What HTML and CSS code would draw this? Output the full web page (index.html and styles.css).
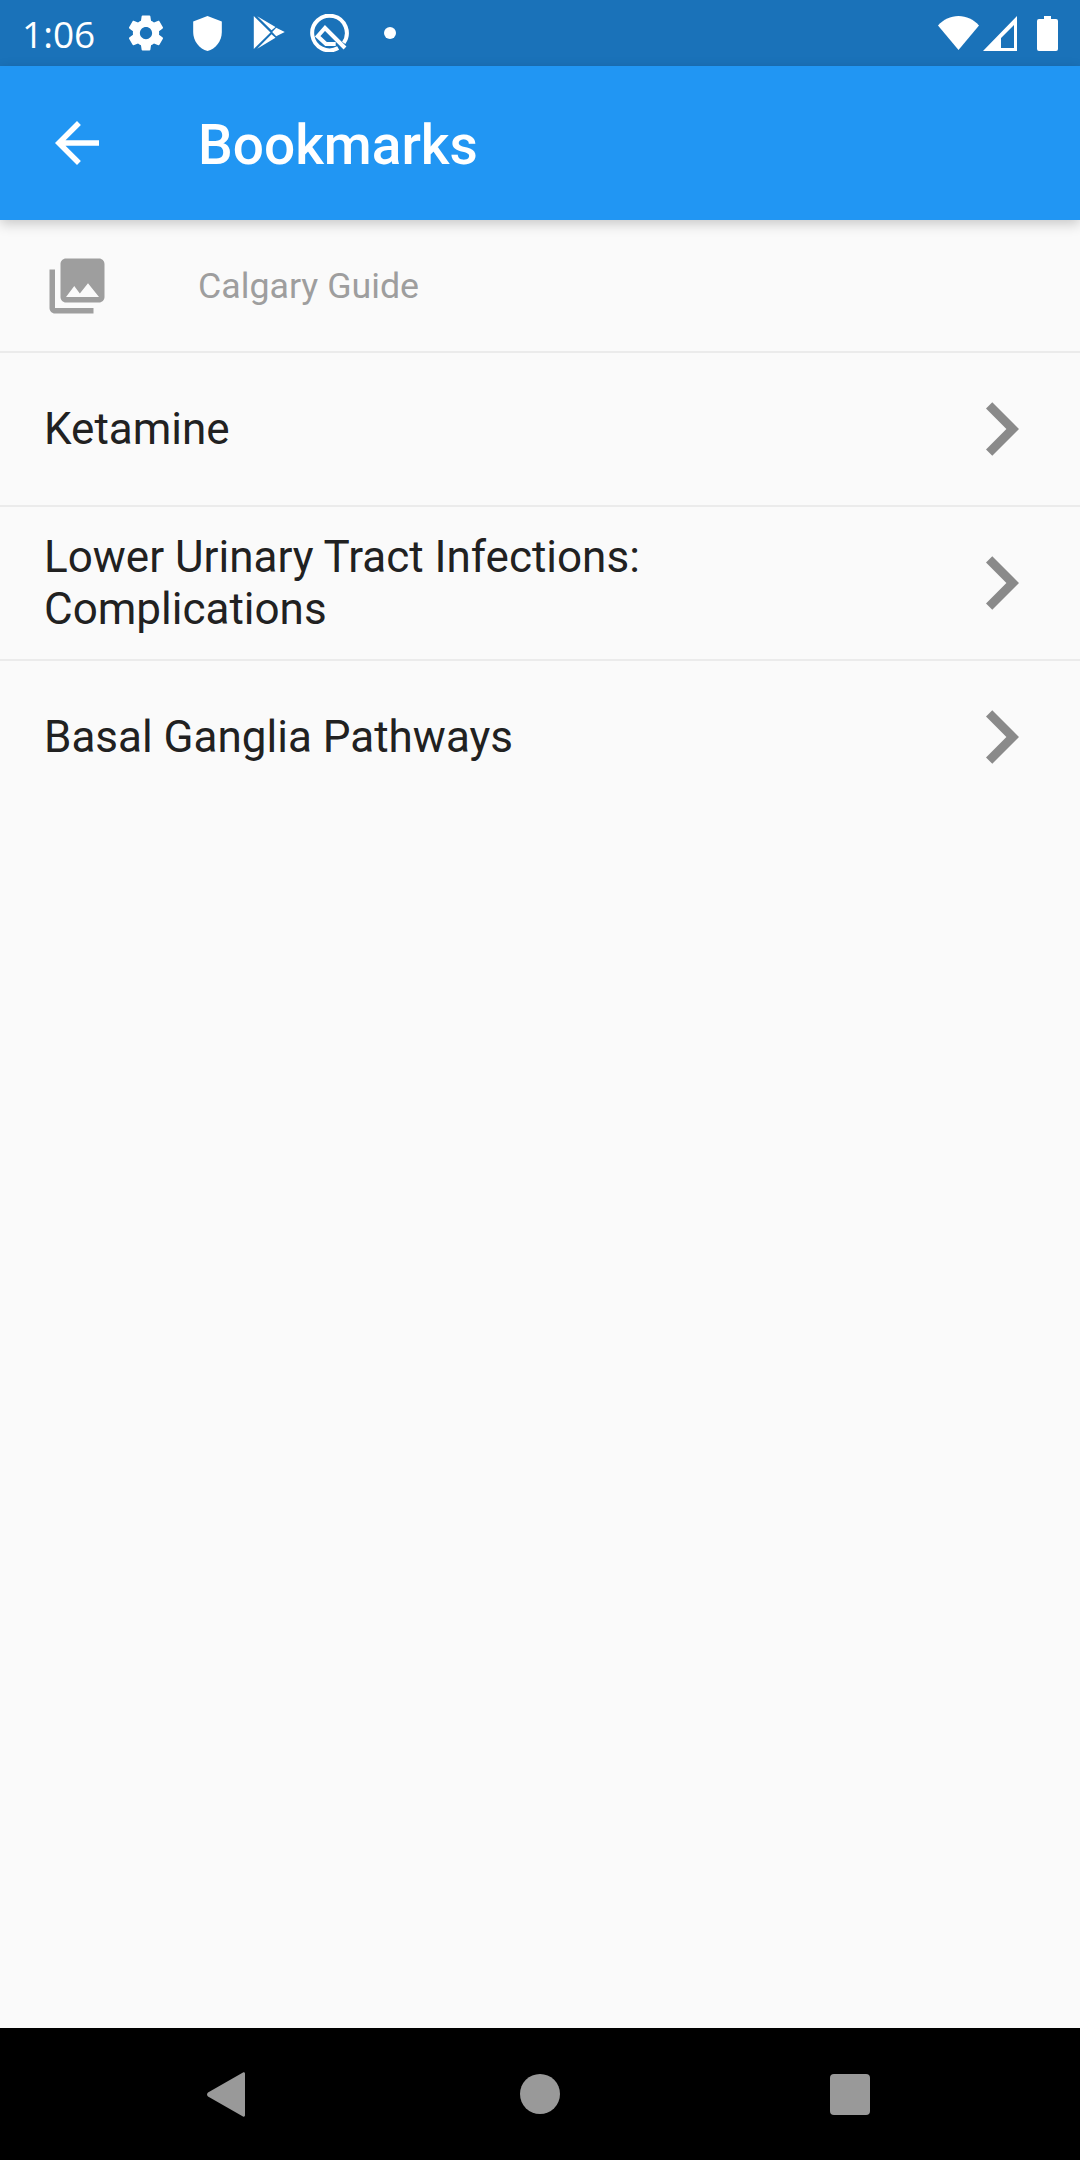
FILE: index.html

```html
<!DOCTYPE html>
<html lang="en">
<head>
  <meta charset="UTF-8" />
  <meta name="viewport" content="width=device-width, initial-scale=1.0" />
  <title>Bookmarks</title>
  <link rel="stylesheet" href="styles.css">
</head>
<body>
  <div class="page">
    <div class="status-bar">
      <span class="time">1:06</span>
      <div class="status-left">
        <svg class="ic-gear" viewBox="0 0 24 24"><path d="M19.43 12.98c.04-.32.07-.64.07-.98s-.03-.66-.07-.98l2.11-1.65c.19-.15.24-.42.12-.64l-2-3.46c-.12-.22-.39-.3-.61-.22l-2.49 1c-.52-.4-1.08-.73-1.69-.98l-.38-2.65C14.46 2.18 14.25 2 14 2h-4c-.25 0-.46.18-.49.42l-.38 2.65c-.61.25-1.17.59-1.69.98l-2.49-1c-.23-.09-.49 0-.61.22l-2 3.46c-.13.22-.07.49.12.64l2.11 1.65c-.04.32-.07.65-.07.98s.03.66.07.98l-2.11 1.65c-.19.15-.24.42-.12.64l2 3.46c.12.22.39.3.61.22l2.49-1c.52.4 1.08.73 1.69.98l.38 2.65c.03.24.24.42.49.42h4c.25 0 .46-.18.49-.42l.38-2.65c.61-.25 1.17-.59 1.69-.98l2.49 1c.23.09.49 0 .61-.22l2-3.46c.12-.22.07-.49-.12-.64l-2.11-1.65zM12 15.5c-1.93 0-3.5-1.57-3.5-3.5s1.57-3.5 3.5-3.5 3.5 1.57 3.5 3.5-1.57 3.5-3.5 3.5z"/></svg>
        <svg class="ic-shield" viewBox="3 1 18 22"><path d="M12 1L3 4.500V11c0 5.550 3.840 10.740 9 12 5.160-1.260 9-6.450 9-12V4.500L12 1z"/></svg>
        <svg class="ic-play" viewBox="0 0 32 34"><path d="M.3 0v33L17 16.500zM3.700.3L22 11l-4 3.300zM22.700 11.700L31.300 16l-8.600 4.300-4-4.300zM3.700 32.700L18 18.300l4 3.400z"/></svg>
        <svg class="ic-q" viewBox="0 0 39 38"><path class="q-line" d="M33.700 28.900A17.300 17.300 0 1 0 28.150 34"/><path class="q-line" d="M35 34L15 14 7.700 22.300 16 30h9.700"/></svg>
        <span class="dot"></span>
      </div>
      <div class="status-right">
        <svg class="ic-wifi" viewBox="0 0 41 34"><path d="M0 9.500C5.500 3.500 12.500 0 20.500 0S35.500 3.500 41 9.500L20.500 34z"/></svg>
        <svg class="ic-signal" viewBox="0 0 34 35"><path fill-rule="evenodd" d="M34 0v35H0zM31 9L18 22v10h13z"/></svg>
        <svg class="ic-battery" viewBox="0 0 21 35"><path d="M7 0h7v3h5a2 2 0 0 1 2 2v28a2 2 0 0 1-2 2H2a2 2 0 0 1-2-2V5a2 2 0 0 1 2-2h5z"/></svg>
      </div>
    </div>

    <header class="app-bar">
      <svg class="back" viewBox="0 0 24 24"><path d="M20 11H7.830l5.590-5.590L12 4l-8 8 8 8 1.410-1.410L7.830 13H20v-2z"/></svg>
      <h1>Bookmarks</h1>
    </header>

    <main class="list">
      <div class="group-row">
        <svg class="group-icon" viewBox="0 0 24 24"><path d="M22 16V4c0-1.100-.9-2-2-2H8c-1.100 0-2 .9-2 2v12c0 1.100.9 2 2 2h12c1.100 0 2-.9 2-2zm-11-4l2.030 2.710L16 11l4 5H8l3-4zM2 6v14c0 1.100.9 2 2 2h14v-2H4V6H2z"/></svg>
        <span class="group-name">Calgary Guide</span>
      </div>
      <div class="item">
        <span class="item-text">Ketamine</span>
        <svg class="chevron" viewBox="8.590 6 7.410 12"><path d="M10 6L8.590 7.410 13.170 12l-4.580 4.590L10 18l6-6z"/></svg>
      </div>
      <div class="item">
        <span class="item-text">Lower Urinary Tract Infections: Complications</span>
        <svg class="chevron" viewBox="8.590 6 7.410 12"><path d="M10 6L8.590 7.410 13.170 12l-4.580 4.590L10 18l6-6z"/></svg>
      </div>
      <div class="item">
        <span class="item-text">Basal Ganglia Pathways</span>
        <svg class="chevron" viewBox="8.590 6 7.410 12"><path d="M10 6L8.590 7.410 13.170 12l-4.580 4.590L10 18l6-6z"/></svg>
      </div>
    </main>

    <div class="nav-bar">
      <svg class="nav-back" viewBox="0 0 38 45"><path d="M36 0.500c1-.6 2-.1 2 1.200v41.600c0 1.300-1 1.800-2 1.200L1 24.500c-1.300-1-1.300-3 0-4z"/></svg>
      <span class="nav-home"></span>
      <span class="nav-recent"></span>
    </div>
  </div>
</body>
</html>
```

FILE: styles.css

```css
body {
  margin: 0;
  background: #fafafa;
  font-family: 'Roboto', sans-serif;
}
.page {
  width: 1080px;
  height: 2160px;
  display: flex;
  flex-direction: column;
  overflow: hidden;
}
.status-bar {
  height: 66px;
  flex-shrink: 0;
  background: #1a72b9;
  color: white;
  display: flex;
  align-items: center;
  padding: 0 22px 0 22px;
  box-sizing: border-box;
}
.status-bar svg {
  fill: white;
  display: block;
}
.status-bar .q-line {
  fill: none;
  stroke: white;
  stroke-width: 4;
}
.time {
  font-family: 'Open Sans', sans-serif;
  font-size: 37px;
  width: 103px;
}
.status-left {
  display: flex;
  align-items: center;
  flex: 1;
}
.ic-gear { width: 42px; height: 42px; }
.ic-shield { width: 29px; height: 35px; margin-left: 26px; }
.ic-play { width: 33px; height: 34px; margin-left: 31px; }
.ic-q { width: 39px; height: 38px; margin-left: 24px; }
.dot {
  width: 12px;
  height: 12px;
  border-radius: 50%;
  background: white;
  margin-left: 35px;
}
.status-right {
  display: flex;
  align-items: center;
}
.ic-wifi { width: 41px; height: 34px; }
.ic-signal { width: 34px; height: 35px; margin-left: 4px; }
.ic-battery { width: 21px; height: 35px; margin-left: 20px; }

.app-bar {
  height: 154px;
  flex-shrink: 0;
  background: #2196f3;
  display: flex;
  align-items: center;
  padding-left: 44px;
  box-shadow: 0 4px 12px rgba(0,0,0,0.2);
  position: relative;
}
.back {
  width: 66px;
  height: 66px;
  fill: white;
}
h1 {
  margin: 3px 0 0 88px;
  font-size: 55px;
  font-weight: 500;
  color: white;
}

.list {
  flex: 1;
}
.group-row {
  height: 133px;
  box-sizing: border-box;
  border-bottom: 2px solid #ebebeb;
  display: flex;
  align-items: center;
  padding-left: 44px;
  color: #9e9e9e;
  font-size: 35.75px;
}
.group-icon {
  width: 66px;
  height: 66px;
  fill: #9e9e9e;
  margin-right: 88px;
}
.item {
  height: 154px;
  box-sizing: border-box;
  border-bottom: 2px solid #ebebeb;
  display: flex;
  align-items: center;
  justify-content: space-between;
  padding: 0 61px 0 44px;
}
.item:last-child {
  border-bottom-color: transparent;
}
.item-text {
  font-size: 44px;
  line-height: 52px;
  color: #212121;
  max-width: 680px;
}
.chevron {
  width: 33px;
  height: 54px;
  fill: #8a8a8a;
}

.nav-bar {
  height: 132px;
  flex-shrink: 0;
  background: black;
  display: flex;
  align-items: center;
  padding: 0 0 0 207px;
  box-sizing: border-box;
}
.nav-back {
  width: 38px;
  height: 45px;
  fill: #999;
  margin-right: 275px;
}
.nav-home {
  width: 40px;
  height: 40px;
  border-radius: 50%;
  background: #999;
  margin-right: 270px;
}
.nav-recent {
  width: 40px;
  height: 41px;
  border-radius: 4px;
  background: #999;
}
```
